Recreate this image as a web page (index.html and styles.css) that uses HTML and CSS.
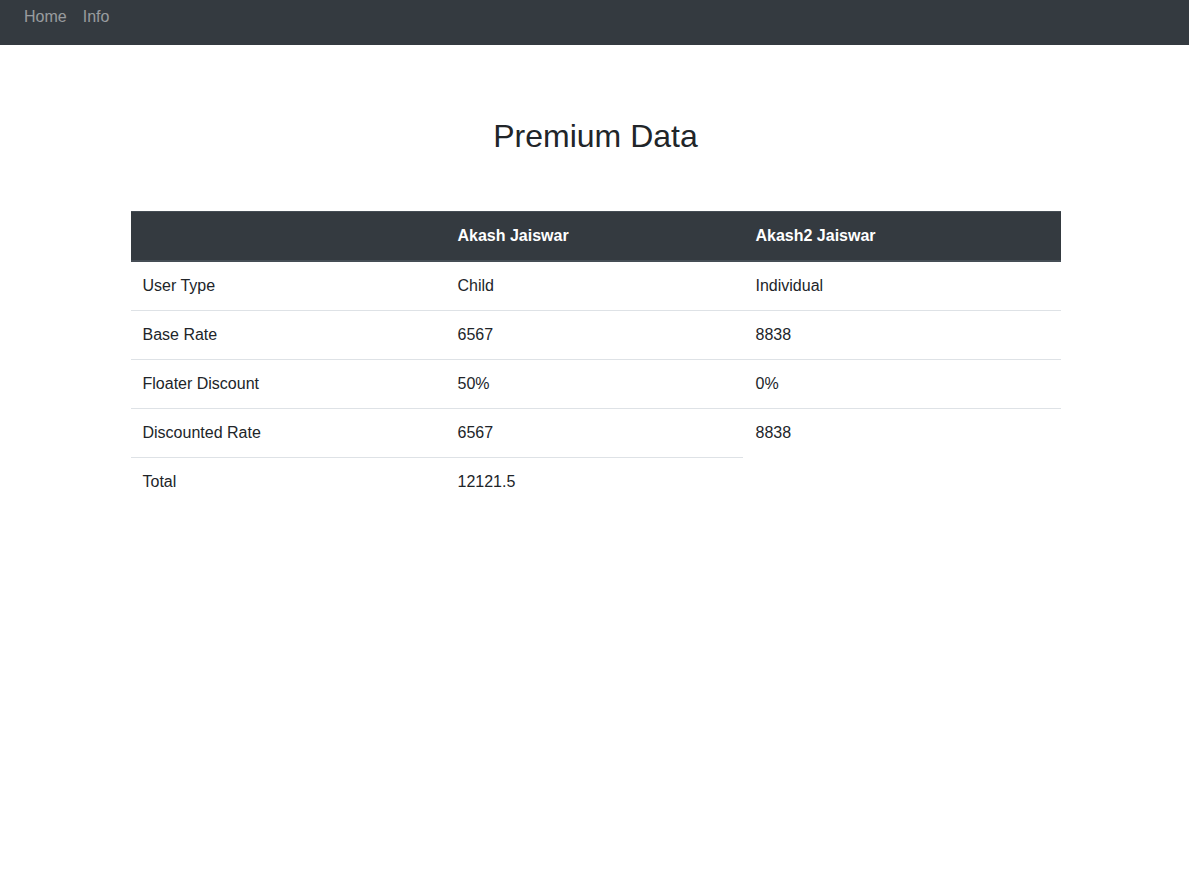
FILE: index.html
```html
<!DOCTYPE html>
<html>
<head>
<meta charset="utf-8">
<link rel="stylesheet" href="styles.css">
</head>
<body>
<nav class="navbar">
  <a class="nav-link" href="#">Home</a>
  <a class="nav-link" href="#">Info</a>
</nav>
<main class="container">
  <h1 class="title">Premium Data</h1>
  <table class="data-table">
    <colgroup>
      <col class="c1"><col class="c2"><col class="c3">
    </colgroup>
    <thead>
      <tr><th></th><th>Akash Jaiswar</th><th>Akash2 Jaiswar</th></tr>
    </thead>
    <tbody>
      <tr><td>User Type</td><td>Child</td><td>Individual</td></tr>
      <tr><td>Base Rate</td><td>6567</td><td>8838</td></tr>
      <tr><td>Floater Discount</td><td>50%</td><td>0%</td></tr>
      <tr><td>Discounted Rate</td><td>6567</td><td>8838</td></tr>
      <tr><td>Total</td><td>12121.5</td></tr>
    </tbody>
  </table>
</main>
</body>
</html>
```
FILE: styles.css
```css
html, body {
  margin: 0;
  padding: 0;
}
body {
  font-family: "Liberation Sans", Arial, sans-serif;
  font-size: 16px;
  line-height: 1.5;
  color: #212529;
  background: #fff;
}
.navbar {
  background: #343a40;
  height: 45px;
  box-sizing: border-box;
  padding: 5px 16px 0 16px;
  display: flex;
  align-items: flex-start;
}
.nav-link {
  color: rgba(255, 255, 255, 0.5);
  text-decoration: none;
  padding: 0 8px;
  line-height: 24px;
}
.container {
  width: 930px;
  margin: 0 auto;
  padding-left: 2px;
}
.title {
  font-size: 32px;
  font-weight: 400;
  line-height: 1.2;
  text-align: center;
  margin: 72px 0 56px 0;
}
.data-table {
  width: 930px;
  border-collapse: collapse;
  table-layout: fixed;
}
.c1 { width: 314px; }
.c2 { width: 298px; }
.c3 { width: 318px; }
.data-table th,
.data-table td {
  padding: 12px;
  text-align: left;
  vertical-align: top;
  line-height: 24px;
}
.data-table th:nth-child(n+2),
.data-table td:nth-child(n+2) {
  padding-left: 13px;
}
.data-table thead th {
  background: #343a40;
  color: #fff;
  font-weight: 700;
  border-top: 1px solid #454d55;
  border-bottom: 2px solid #454d55;
}
.data-table td {
  border-top: 1px solid #dee2e6;
}
.data-table tbody tr:first-child td {
  border-top: none;
}
```
